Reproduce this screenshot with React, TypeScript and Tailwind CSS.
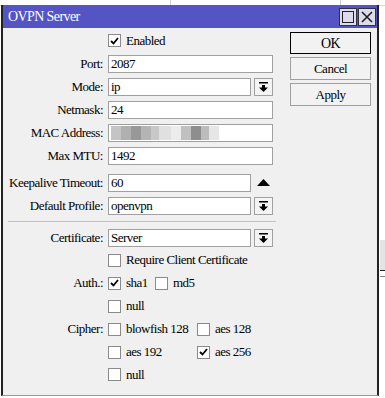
function Check({ checked }: { checked?: boolean }) {
  return (
    <span className="inline-flex w-[13px] h-[13px] shrink-0 items-center justify-center bg-white border border-[#8a8a8a]">
      {checked && (
        <svg width="9" height="8" viewBox="0 0 9 8">
          <path d="M1 4 L3.5 6.5 L8 1" fill="none" stroke="#000" strokeWidth="1.8" />
        </svg>
      )}
    </span>
  )
}

function DropBtn() {
  return (
    <div className="w-[19px] h-[18px] border border-[#a0a0a0] bg-[#f4f4f4] flex items-center justify-center shrink-0">
      <svg width="9" height="10" viewBox="0 0 9 10">
        <rect x="0" y="0" width="9" height="1.5" fill="#000" />
        <rect x="3" y="3" width="3" height="3" fill="#000" />
        <path d="M0 5.5 H9 L4.5 10 Z" fill="#000" />
      </svg>
    </div>
  )
}

function Field({ label, value, drop, up, blur }: { label: string; value?: string; drop?: boolean; up?: boolean; blur?: boolean }) {
  const narrow = drop || up
  return (
    <div className="flex items-center h-[23px]">
      <div className="w-[101px] text-right pr-[1px] mr-[4px] whitespace-nowrap">{label}</div>
      <div className={`${narrow ? 'w-[143px]' : 'w-[165px]'} h-[18px] bg-white border border-[#a0a0a0] px-[2px] leading-[16px] flex items-center`}>
        {blur ? (
          <div className="flex h-[14px]">
            <div className="w-[10px] bg-[#c4c4c4]" />
            <div className="w-[10px] bg-[#b0b0b0]" />
            <div className="w-[10px] bg-[#989898]" />
            <div className="w-[10px] bg-[#b4b4b4]" />
            <div className="w-[8px] bg-[#c8c8c8]" />
            <div className="w-[12px] bg-[#e0e0e0]" />
            <div className="w-[10px] bg-[#ececec]" />
            <div className="w-[10px] bg-[#c0c0c0]" />
            <div className="w-[10px] bg-[#8e8e8e]" />
            <div className="w-[8px] bg-[#bcbcbc]" />
            <div className="w-[10px] bg-[#e6e6e6]" />
          </div>
        ) : (
          value
        )}
      </div>
      {drop && <div className="ml-[3px]"><DropBtn /></div>}
      {up && (
        <div className="ml-[6px] w-[13px] flex justify-center">
          <svg width="13" height="7" viewBox="0 0 13 7">
            <path d="M6.5 0 L13 7 H0 Z" fill="#000" />
          </svg>
        </div>
      )}
    </div>
  )
}

function Opt({ label, checked, w }: { label: string; checked?: boolean; w?: string }) {
  return (
    <div className={`flex items-center gap-[5px] ${w ?? ''}`}>
      <Check checked={checked} />
      <span className="whitespace-nowrap">{label}</span>
    </div>
  )
}

function CheckRow({ label, h, children }: { label?: string; h: string; children: React.ReactNode }) {
  return (
    <div className={`flex items-center ${h}`}>
      <div className="w-[101px] text-right pr-[1px] mr-[4px] whitespace-nowrap">{label}</div>
      <div className="flex items-center">{children}</div>
    </div>
  )
}

export default function App() {
  return (
    <div className="relative w-[385px] h-[398px] bg-white overflow-hidden text-[13px] text-black font-['Liberation_Serif','Times_New_Roman',serif] tracking-[-0.5px]">
      {/* things behind the dialog */}
      <div className="absolute left-0 top-[5px] w-[385px] h-px bg-[#d8d8d8]" />
      <div className="absolute left-[170px] top-0 w-px h-[5px] bg-[#d0d0d0]" />
      <div className="absolute left-[340px] top-0 w-px h-[5px] bg-[#d0d0d0]" />
      <div className="absolute left-[380px] top-[240px] w-[5px] h-[30px] bg-[#e4e4e4]" />
      <div className="absolute left-[380px] top-[270px] w-[5px] h-px bg-[#202020]" />
      <div className="absolute left-[380px] top-[276px] w-[5px] h-px bg-[#808080]" />

      <div className="absolute left-[1px] top-[5px] w-[378px] h-[391px] bg-[#f0f0f0] border-l-2 border-r-2 border-[#222] border-b border-b-[#9a9a9a] flex flex-col">
        {/* title bar */}
        <div className="h-[23px] bg-[#5454c4] flex items-center justify-between pl-[5px] pr-[1px] shrink-0">
          <span className="text-white text-[14px] tracking-[-0.6px]">OVPN Server</span>
          <div className="flex gap-[1px]">
            <div className="w-[18px] h-[18px] bg-[#dcdcec] border border-[#303040] flex items-center justify-center">
              <div className="w-[12px] h-[12px] border border-[#202020]" />
            </div>
            <div className="w-[18px] h-[18px] bg-[#dcdcec] border border-[#303040] flex items-center justify-center">
              <svg width="12" height="12" viewBox="0 0 12 12">
                <path d="M1 1 L11 11 M11 1 L1 11" stroke="#202020" strokeWidth="1.6" />
              </svg>
            </div>
          </div>
        </div>

        <div className="flex flex-1">
          {/* form */}
          <div className="w-[285px] flex flex-col pt-[1px]">
            <CheckRow h="h-[23px]">
              <Opt label="Enabled" checked />
            </CheckRow>
            <Field label="Port:" value="2087" />
            <Field label="Mode:" value="ip" drop />
            <Field label="Netmask:" value="24" />
            <Field label="MAC Address:" blur />
            <Field label="Max MTU:" value="1492" />
            <div className="h-[4px]" />
            <Field label="Keepalive Timeout:" value="60" up />
            <Field label="Default Profile:" value="openvpn" drop />
            <div className="h-[9px] flex items-center">
              <div className="ml-[5px] w-[268px] h-px bg-[#c0c0c0]" />
            </div>
            <Field label="Certificate:" value="Server" drop />
            <CheckRow h="h-[22px]">
              <Opt label="Require Client Certificate" />
            </CheckRow>
            <CheckRow label="Auth.:" h="h-[24px]">
              <Opt label="sha1" checked w="w-[47px]" />
              <Opt label="md5" />
            </CheckRow>
            <CheckRow h="h-[22px]">
              <Opt label="null" />
            </CheckRow>
            <CheckRow label="Cipher:" h="h-[24px]">
              <Opt label="blowfish 128" w="w-[89px]" />
              <Opt label="aes 128" />
            </CheckRow>
            <CheckRow h="h-[22px]">
              <Opt label="aes 192" w="w-[89px]" />
              <Opt label="aes 256" checked />
            </CheckRow>
            <CheckRow h="h-[23px]">
              <Opt label="null" />
            </CheckRow>
          </div>

          {/* buttons */}
          <div className="flex flex-col gap-[3px] pt-[4px] ml-[2px]">
            <button className="w-[81px] h-[22px] border border-black bg-[#f2f2f2] text-[14px]">OK</button>
            <button className="w-[81px] h-[23px] border border-[#a0a0a0] bg-[#f2f2f2]">Cancel</button>
            <button className="w-[81px] h-[23px] border border-[#a0a0a0] bg-[#f2f2f2]">Apply</button>
          </div>
        </div>
      </div>
    </div>
  )
}
